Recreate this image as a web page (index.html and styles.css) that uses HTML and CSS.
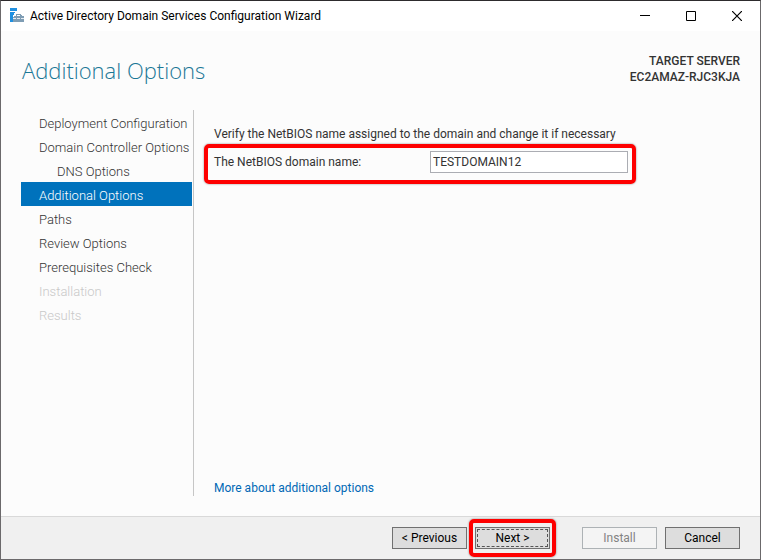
FILE: index.html
```html
<!DOCTYPE html>
<html lang="en">
<head>
  <meta charset="UTF-8">
  <meta name="viewport" content="width=device-width, initial-scale=1">
  <title>Active Directory Domain Services Configuration Wizard</title>
  <link rel="stylesheet" href="styles.css">
</head>
<body>
  <div class="window">
    <header class="titlebar">
      <svg class="app-icon" width="16" height="16" viewBox="0 0 16 16" shape-rendering="crispEdges">
        <path d="M1 0h7v3H1zM1 4h5v1H5v2H4v7H1z" fill="#2090e0"/>
        <path d="M7 6h5v1h1v1h2v6H4V9l1-1h2z" fill="#7f9db4"/>
        <path d="M8 7h3v1H8z" fill="#fff"/>
        <path d="M4 10h3v1H4zM8 10h3v1H8zM12 10h3v1h-3z" fill="#e4ebf0"/>
      </svg>
      <span class="caption">Active Directory Domain Services Configuration Wizard</span>
      <button class="win-btn" type="button" aria-label="Minimize">
        <svg width="10" height="10" viewBox="0 0 10 10" shape-rendering="crispEdges"><path d="M0 4h10v1H0z" fill="#000"/></svg>
      </button>
      <button class="win-btn" type="button" aria-label="Maximize">
        <svg width="10" height="10" viewBox="0 0 10 10"><path d="M.5 .5h9v9h-9z" fill="none" stroke="#000"/></svg>
      </button>
      <button class="win-btn" type="button" aria-label="Close">
        <svg width="10" height="10" viewBox="0 0 10 10"><path d="M0 0l10 10M10 0L0 10" stroke="#000" stroke-width="1.2"/></svg>
      </button>
    </header>

    <div class="page-head">
      <h1>Additional Options</h1>
      <div class="target">TARGET SERVER<br>EC2AMAZ-RJC3KJA</div>
    </div>

    <div class="content">
      <!-- Wizard steps -->
      <nav class="steps">
        <ul>
          <li>Deployment Configuration</li>
          <li>Domain Controller Options</li>
          <li class="sub">DNS Options</li>
          <li class="current" aria-current="step">Additional Options</li>
          <li>Paths</li>
          <li>Review Options</li>
          <li>Prerequisites Check</li>
          <li class="disabled">Installation</li>
          <li class="disabled">Results</li>
        </ul>
      </nav>

      <main class="panel">
        <p>Verify the NetBIOS name assigned to the domain and change it if necessary</p>
        <div class="field-row">
          <label for="netbios">The NetBIOS domain name:</label>
          <input type="text" id="netbios" value="TESTDOMAIN12">
        </div>
        <a class="more" href="#">More about additional options</a>
      </main>
    </div>

    <footer class="actions">
      <button class="btn" type="button">&lt; Previous</button>
      <span class="callout"><button class="btn focused" type="button">Next &gt;</button></span>
      <button class="btn install" type="button" disabled>Install</button>
      <button class="btn" type="button">Cancel</button>
    </footer>
  </div>
</body>
</html>
```

FILE: styles.css
```css
* {
  box-sizing: border-box;
}

body {
  margin: 0;
  font-family: Roboto, "Open Sans", sans-serif;
  font-size: 12px;
  line-height: 16px;
  color: #333;
}

button,
input {
  font: inherit;
}

.window {
  display: flex;
  flex-direction: column;
  min-height: 100vh;
  background: #fcfcfc;
  border: 1px solid #6b696b;
  border-top-color: #2d2b2d;
}

/* Title bar */
.titlebar {
  display: flex;
  align-items: center;
  height: 30px;
  padding-left: 8px;
  background: #fff;
  color: #000;
}

.caption {
  flex: 1;
  margin-left: 5px;
}

.win-btn {
  display: flex;
  align-items: center;
  justify-content: center;
  width: 46px;
  height: 28px;
  padding: 0;
  border: none;
  background: transparent;
}

/* Heading and target server */
.page-head {
  display: flex;
  justify-content: space-between;
  align-items: flex-start;
  padding: 22px 20px 2px 21px;
}

h1 {
  margin: 0;
  font-family: "Open Sans", sans-serif;
  font-size: 22px;
  line-height: 34px;
  font-weight: 300;
  color: #1b7796;
}

.target {
  text-align: right;
  font-weight: 500;
}

/* Steps on the left, form on the right */
.content {
  flex: 1;
  display: flex;
  padding: 21px 20px 20px 20px;
}

.steps {
  flex: none;
  width: 173px;
  padding-right: 1px;
  border-right: 1px solid #c6c6c6;
}

.steps ul {
  list-style: none;
  margin: 0;
  padding: 0;
}

.steps li {
  height: 24px;
  padding: 4px 0 0 18px;
  font-size: 13px;
  line-height: 20px;
  font-weight: 300;
  white-space: nowrap;
}

.steps .sub {
  padding-left: 36px;
}

.steps .current {
  background: #0072bc;
  color: #fff;
}

.steps .disabled {
  color: #c8c8c8;
}

.panel {
  flex: 1;
  display: flex;
  flex-direction: column;
  align-items: flex-start;
  padding: 16px 0 0 10px;
}

.panel p {
  margin: 0 0 2px 10px;
}

.field-row {
  display: flex;
  align-items: center;
  height: 40px;
  padding: 0 4px 4px 6px;
  border: 4px solid #fe0000;
  border-radius: 5px;
  box-shadow: 0 0 2px rgba(0, 0, 0, 0.5);
}

.field-row label {
  width: 216px;
}

.field-row input {
  width: 198px;
  height: 22px;
  padding: 0 2px;
  border: 1px solid #abadb3;
  border-radius: 0;
  background: #fff;
  color: #333;
}

.more {
  margin: auto 0 0 10px;
  color: #0068b5;
  text-decoration: none;
}

/* Footer buttons */
.actions {
  display: flex;
  justify-content: flex-end;
  gap: 8px;
  padding: 10px 20px;
  background: #f0f0f0;
  border-top: 1px solid #d9d9d9;
}

.btn {
  display: block;
  width: 75px;
  height: 22px;
  padding: 0;
  line-height: 20px;
  border: 1px solid #707070;
  border-radius: 0;
  background: #ddd;
  color: #000;
}

.btn:disabled {
  border-color: #adb2b5;
  background: #f4f4f4;
  color: #838383;
}

.btn.install {
  margin-left: 24px;
}

.focused {
  outline: 1px dashed #555;
  outline-offset: -3px;
}

.callout {
  position: relative;
}

.callout::after {
  content: "";
  position: absolute;
  inset: -8px -6px;
  border: 4px solid #fe0000;
  border-radius: 5px;
  box-shadow: 0 0 2px rgba(0, 0, 0, 0.5);
  pointer-events: none;
}
```
